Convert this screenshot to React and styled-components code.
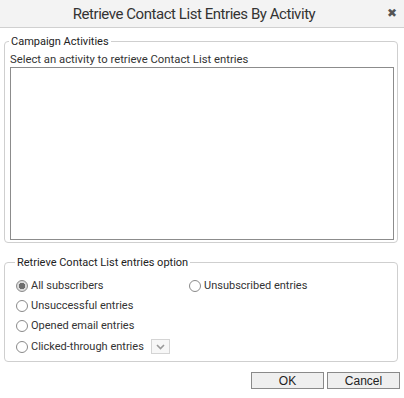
import styled, { createGlobalStyle } from 'styled-components';

const Global = createGlobalStyle`
  body {
    margin: 0;
    background: #fff;
    font-family: Roboto, "Liberation Sans", sans-serif;
    color: #222;
  }
`;

const Dialog = styled.div`
  width: 404px;
  height: 398px;
  display: flex;
  flex-direction: column;
`;

const Header = styled.div`
  height: 27px;
  background: #f3f3f3;
  border-bottom: 1px solid #d0d0d0;
  display: flex;
  align-items: center;
  position: relative;
`;

const Title = styled.h1`
  flex: 1;
  margin: 0;
  padding-right: 16px;
  text-align: center;
  font-family: Roboto, "Liberation Sans", sans-serif;
  font-weight: normal;
  font-size: 15px;
  letter-spacing: -0.45px;
  color: #333;
`;

const Close = styled.span`
  position: absolute;
  right: 7px;
  top: 6px;
  font-family: "DejaVu Sans", sans-serif;
  font-size: 12px;
  color: #555;
  font-weight: bold;
`;

const Body = styled.div`
  padding: 7px 6px 0 4px;
  display: flex;
  flex-direction: column;
`;

const Fieldset = styled.fieldset`
  margin: 0 0 ${(p) => p.$gap || 0}px;
  border: 1px solid #cfcfcf;
  border-radius: 4px;
  padding: ${(p) => p.$pad};
  min-width: 0;
`;

const Legend = styled.legend`
  font-size: 11px;
  padding: 0 2px;
  margin-left: -1px;
  color: #222;
`;

const Hint = styled.div`
  font-size: 11.3px;
  line-height: 13px;
  margin-bottom: 1px;
  color: #333;
`;

const ListBox = styled.div`
  height: 171px;
  border: 1px solid #8c8c8c;
  background: #fff;
`;

const Options = styled.div`
  display: grid;
  grid-template-columns: 173px 1fr;
  row-gap: 7px;
`;

const Option = styled.label`
  display: flex;
  align-items: center;
  gap: 3px;
  font-size: 11px;
  line-height: 13px;
  color: #333;
  grid-column: ${(p) => p.$col || 'auto'};
`;

const Radio = styled.span`
  width: 10px;
  height: 10px;
  border: 1px solid #8a8a8a;
  border-radius: 50%;
  background: ${(p) =>
    p.$checked
      ? 'radial-gradient(circle, #6e6e6e 0 3px, #dcdcdc 3.5px)'
      : '#fff'};
  flex-shrink: 0;
`;

const Select = styled.span`
  width: 17px;
  height: 13px;
  margin-left: 4px;
  border: 1px solid #d4d4d4;
  background: #f7f7f7;
  display: flex;
  align-items: center;
  justify-content: center;
`;

const Footer = styled.div`
  display: flex;
  justify-content: flex-end;
  gap: 3px;
  padding: 10px 4px 0 0;
`;

const Button = styled.button`
  width: 73px;
  height: 17px;
  padding: 0;
  border: 1px solid #8a8a8a;
  background: #efefef;
  font-family: "Liberation Sans", Arial, sans-serif;
  font-size: 12px;
  color: #222;
`;

export default function App() {
  return (
    <Dialog>
      <Global />
      <Header>
        <Title>Retrieve Contact List Entries By Activity</Title>
        <Close>✖</Close>
      </Header>
      <Body>
        <Fieldset $pad="5px 3px 2px 5px" $gap={13}>
          <Legend>Campaign Activities</Legend>
          <Hint>Select an activity to retrieve Contact List entries</Hint>
          <ListBox />
        </Fieldset>
        <Fieldset $pad="10px 5px 7px 11px">
          <Legend>Retrieve Contact List entries option</Legend>
          <Options>
            <Option>
              <Radio $checked />
              All subscribers
            </Option>
            <Option>
              <Radio />
              Unsubscribed entries
            </Option>
            <Option $col="1">
              <Radio />
              Unsuccessful entries
            </Option>
            <Option $col="1">
              <Radio />
              Opened email entries
            </Option>
            <Option $col="1">
              <Radio />
              Clicked-through entries
              <Select>
                <svg width="9" height="6" viewBox="0 0 9 6">
                  <path d="M1 1l3.5 3.5L8 1" fill="none" stroke="#9a9a9a" strokeWidth="1.6" />
                </svg>
              </Select>
            </Option>
          </Options>
        </Fieldset>
      </Body>
      <Footer>
        <Button>OK</Button>
        <Button>Cancel</Button>
      </Footer>
    </Dialog>
  );
}
